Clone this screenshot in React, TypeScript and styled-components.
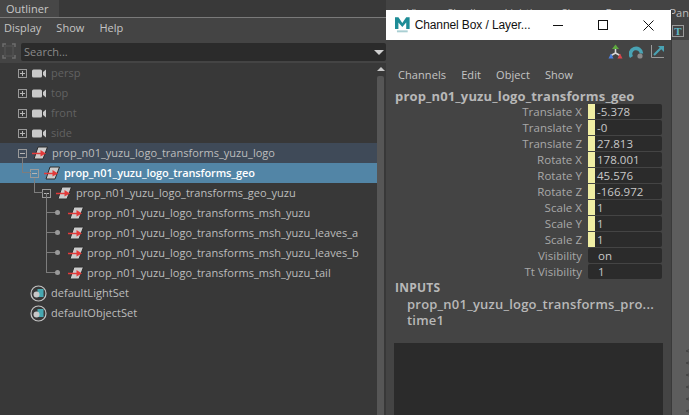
import * as React from "react";
import styled, { createGlobalStyle } from "styled-components";

const Global = createGlobalStyle`
  html, body {
    margin: 0;
    padding: 0;
    background: #444444;
    overflow: hidden;
  }
  * { box-sizing: border-box; }
`;

const Desktop = styled.div`
  position: relative;
  width: 689px;
  height: 415px;
  display: grid;
  grid-template-columns: 386px 1fr;
  overflow: hidden;
  font-family: "Open Sans", "Noto Sans", sans-serif;
  font-size: 11px;
  letter-spacing: 0.03px;
  color: #c4c4c4;
`;

/* outliner */
const Outliner = styled.div`
  display: flex;
  flex-direction: column;
  height: 415px;
  background: #383838;
`;

const TabStrip = styled.div`
  height: 18px;
  background: #393939;
  border-bottom: 1px solid #7a7a7a;
  display: flex;
`;

const Tab = styled.div`
  width: 59px;
  height: 17px;
  background: #474747;
  padding-left: 6px;
  line-height: 17px;
  color: #c8c8c8;
`;

const MenuBar = styled.div<{ $gap: number }>`
  display: flex;
  gap: ${(p) => p.$gap}px;
  align-items: center;
`;

const OutlinerMenu = styled(MenuBar)`
  height: 25px;
  padding: 0 0 7px 4px;
  background: #444444;
`;

const SearchRow = styled.div`
  height: 20px;
  background: #444444;
  display: flex;
  align-items: flex-start;
  padding-left: 2px;
  gap: 5px;
`;

const SearchField = styled.div`
  flex: 1;
  height: 18px;
  background: #2b2b2b;
  border-radius: 2px;
  color: #8a8a8a;
  padding-left: 3px;
  line-height: 18px;
  display: flex;
  justify-content: space-between;
  align-items: center;
  padding-right: 2px;
`;

const TreeArea = styled.div`
  flex: 1;
  display: grid;
  grid-template-columns: 377px 7px 2px;
`;

const Tree = styled.div`
  display: flex;
  flex-direction: column;
`;

const Row = styled.div<{ $level: number; $state?: "parent" | "selected"; $dim?: boolean }>`
  position: relative;
  height: 20px;
  display: flex;
  align-items: center;
  padding-left: ${(p) => 18 + p.$level * 12}px;
  background: ${(p) =>
    p.$state === "selected" ? "#5285a6" : p.$state === "parent" ? "#3f4a58" : "transparent"};
  color: ${(p) => (p.$state === "selected" ? "#ffffff" : p.$dim ? "#626262" : "#bdbdbd")};
  font-weight: ${(p) => (p.$state === "selected" ? 600 : 400)};
  letter-spacing: ${(p) => (p.$state === "selected" ? "-0.1px" : "inherit")};
`;

const RowLabel = styled.span<{ $tight?: boolean }>`
  white-space: nowrap;
  margin-left: ${(p) => (p.$tight ? 3 : 4)}px;
  padding-bottom: 2px;
`;

const Gutter = styled.span`
  width: 9px;
  height: 9px;
  margin-right: 5px;
  display: flex;
  flex: none;
`;

const Elbow = styled.span<{ $height: number; $left: number }>`
  position: absolute;
  left: ${(p) => p.$left}px;
  bottom: 10px;
  width: 9px;
  height: ${(p) => p.$height}px;
  border-left: 1px solid #7d7d7d;
  border-bottom: 1px solid #7d7d7d;
`;

const Dot = styled.span`
  width: 5px;
  height: 5px;
  border-radius: 50%;
  background: #9a9a9a;
  margin: 1px 0 0 1px;
`;

const Scrollbar = styled.div`
  display: flex;
  flex-direction: column;
  align-items: center;
`;

const ScrollThumb = styled.div`
  flex: 1;
  width: 7px;
  margin-top: 5px;
  background: #565656;
  border-radius: 2px 2px 0 0;
`;

const ArrowUp = styled.div`
  margin-top: 4px;
  width: 0;
  height: 0;
  border-left: 4px solid transparent;
  border-right: 4px solid transparent;
  border-bottom: 4px solid #c8c8c8;
`;

const ArrowDown = styled.div`
  width: 0;
  height: 0;
  border-left: 5px solid transparent;
  border-right: 5px solid transparent;
  border-top: 5px solid #d0d0d0;
`;

/* viewport behind the floating window */
const Viewport = styled.div`
  display: flex;
  flex-direction: column;
  background: #5d5d5d;
`;

const ViewportMenu = styled(MenuBar)`
  height: 24px;
  background: #444444;
  padding-left: 21px;
  white-space: nowrap;
  overflow: hidden;
  color: #bdbdbd;
`;

const ViewportTools = styled.div`
  height: 16px;
  background: #444444;
  display: flex;
  padding: 1px 0 0 286px;
`;

const TextTool = styled.div`
  width: 12px;
  height: 12px;
  border: 1px solid #9a9a9a;
  color: #5fb6c4;
  font-weight: 700;
  font-family: "Liberation Serif", serif;
  font-size: 11px;
  line-height: 10px;
  text-align: center;
`;

const ViewportCanvas = styled.div`
  flex: 1;
  display: flex;
  justify-content: flex-end;
  align-items: flex-end;
`;

/* floating channel box */
const ChannelWindow = styled.div`
  position: absolute;
  left: 386px;
  top: 10px;
  width: 286px;
  height: 405px;
  display: flex;
  flex-direction: column;
  background: #444444;
  border-right: 1px solid #3a3a3a;
`;

const TitleBar = styled.div`
  height: 30px;
  background: #ffffff;
  color: #111111;
  display: flex;
  align-items: center;
  font-family: "Liberation Sans", sans-serif;
  font-size: 12px;
  letter-spacing: -0.1px;
  padding-left: 9px;
`;

const TitleText = styled.span`
  margin-left: 5px;
  width: 125px;
  white-space: nowrap;
`;

const WindowButton = styled.div`
  width: 46px;
  height: 30px;
  display: flex;
  align-items: center;
  justify-content: center;
`;

const IconRow = styled.div`
  height: 22px;
  display: flex;
  align-items: center;
  justify-content: flex-end;
  gap: 6px;
  padding: 0 6px 0 0;
`;

const ChannelMenu = styled(MenuBar)`
  height: 22px;
  padding-left: 12px;
  margin-top: 1px;
  letter-spacing: 0.08px;
`;

const ObjectName = styled.div`
  font-weight: 700;
  font-size: 13px;
  letter-spacing: 0.15px;
  padding-left: 9px;
  height: 16px;
  line-height: 16px;
  margin-top: 3px;
  color: #b8b8b8;
`;

const Channels = styled.div`
  display: flex;
  flex-direction: column;
  margin-top: -1px;
`;

const ChannelRow = styled.div`
  display: grid;
  grid-template-columns: 202px 7px 67px;
  column-gap: 0;
  height: 16px;
  align-items: center;
`;

const ChannelLabel = styled.div`
  text-align: right;
  padding-right: 6px;
  font-size: 11.5px;
  color: #a8a8a8;
`;

const Keyed = styled.div`
  height: 15px;
  background: #f0eea4;
`;

const Value = styled.div<{ $wide?: boolean }>`
  grid-column: ${(p) => (p.$wide ? "2 / 4" : "3")};
  height: 15px;
  background: #2b2b2b;
  border-radius: ${(p) => (p.$wide ? "2px" : "0 2px 2px 0")};
  padding-left: ${(p) => (p.$wide ? "10px" : "2px")};
  line-height: 15px;
  font-size: 11.5px;
  color: #c8c8c8;
`;

const Inputs = styled.div`
  margin-top: 1px;
  padding-left: 9px;
  font-size: 13px;
  letter-spacing: 0.22px;
  display: flex;
  flex-direction: column;
  color: #b8b8b8;
`;

const InputsHead = styled.div`
  font-weight: 700;
  font-size: 12px;
  height: 16px;
  line-height: 16px;
`;

const InputItem = styled.div`
  font-weight: 600;
  height: 16px;
  line-height: 16px;
  padding-left: 12px;
  white-space: nowrap;
`;

const DarkPanel = styled.div`
  flex: 1;
  margin: 15px 8px 0 8px;
  background: #2b2b2b;
`;

const CameraIcon = () => (
  <svg width="15" height="9" viewBox="0 0 15 9">
    <rect x="0" y="0.5" width="10" height="8" rx="1.5" fill="#c9c9c9" />
    <path d="M14 0.5 V8.5 L11 6 V3 Z" fill="#c9c9c9" />
  </svg>
);

const TransformIcon = () => (
  <svg width="16" height="14" viewBox="0 0 16 14" style={{ flex: "none" }}>
    <path d="M6 1 H15.5 L11 13 H2 Z" fill="#cbcbcb" stroke="#2c2c2c" strokeWidth="1" />
    <path d="M0 7.5 H10" stroke="#e23a3a" strokeWidth="1.5" />
    <path d="M8.5 4 L14 7.5 L8.5 10.5 Z" fill="#e23a3a" />
  </svg>
);

const SetIcon = () => (
  <svg width="17" height="17" viewBox="0 0 17 17" style={{ flex: "none" }}>
    <circle cx="8.5" cy="8.5" r="7.5" fill="none" stroke="#c4c4c4" strokeWidth="1.2" />
    <rect x="7.5" y="4" width="6" height="8" fill="#47a7b0" />
    <circle cx="6.5" cy="9.5" r="3" fill="#c8c8c8" />
  </svg>
);

const Expander = ({ open }: { open: boolean }) => (
  <svg width="9" height="9" viewBox="0 0 9 9">
    <rect x="0.5" y="0.5" width="8" height="8" fill="none" stroke="#9a9a9a" />
    <path d="M2 4.5 H7" stroke="#b5b5b5" />
    {!open && <path d="M4.5 2 V7" stroke="#b5b5b5" />}
  </svg>
);

const FitIcon = () => (
  <svg width="14" height="16" viewBox="0 0 14 16">
    <path
      d="M1 4 V1 H4 M10 1 H13 V4 M13 12 V15 H10 M4 15 H1 V12"
      fill="none"
      stroke="#6c6c6c"
      strokeWidth="1.5"
    />
    <rect x="3" y="3" width="8" height="10" fill="none" stroke="#565656" />
  </svg>
);

const MayaLogo = () => (
  <svg width="15" height="18" viewBox="0 0 15 18">
    <path d="M0 13 V1 H3.5 L7.5 7 L11.5 1 H15 V13 H11.5 V6.5 L7.5 11 L3.5 6.5 V13 Z" fill="#1e8c96" />
    <rect x="2" y="14.5" width="11" height="2" fill="#a9cfd3" />
  </svg>
);

const AxisIcon = () => (
  <svg width="15" height="15" viewBox="0 0 15 15">
    <path d="M7.5 5 V9 M7.5 9 L3 11.5 M7.5 9 L12 11.5" stroke="#d8d8d8" strokeWidth="1.5" />
    <path d="M7.5 0.5 L11 5 H4 Z" fill="#5ea83f" />
    <path d="M0.5 14.5 L3 9.5 L5.5 14.5 Z" fill="#4a7fe0" />
    <path d="M9.5 14.5 L12 9.5 L14.5 14.5 Z" fill="#d9444a" />
  </svg>
);

const SnapIcon = () => (
  <svg width="15" height="15" viewBox="0 0 15 15">
    <path d="M2.5 13 A5.5 5.5 0 1 1 12.5 9.5" fill="none" stroke="#49a3b4" strokeWidth="3.6" />
    <circle cx="11" cy="12" r="2.6" fill="#8a8a8a" />
  </svg>
);

const ScaleIcon = () => (
  <svg width="15" height="15" viewBox="0 0 15 15">
    <path d="M1.5 1 V13.5 H14" fill="none" stroke="#9a9a9a" />
    <path d="M4 11 L11 4" stroke="#49a3b4" strokeWidth="2.2" />
    <path d="M8 2 H14 V8 Z" fill="#49a3b4" />
  </svg>
);

const Minimize = () => (
  <svg width="11" height="11" viewBox="0 0 11 11">
    <path d="M0 5.5 H10" stroke="#111" />
  </svg>
);

const Maximize = () => (
  <svg width="11" height="11" viewBox="0 0 11 11">
    <rect x="0.5" y="0.5" width="9" height="9" fill="none" stroke="#111" />
  </svg>
);

const CloseIcon = () => (
  <svg width="11" height="11" viewBox="0 0 11 11">
    <path d="M0.5 0.5 L10.5 10.5 M10.5 0.5 L0.5 10.5" stroke="#111" />
  </svg>
);

const Mesh = () => (
  <svg width="17" height="72" viewBox="0 0 17 72">
    <path
      d="M0 8 L17 0 M0 8 L17 14 M0 20 L17 14 M0 20 L17 26 M0 32 L17 26 M0 32 L17 38 M0 44 L17 38 M0 44 L17 50 M0 56 L17 50 M0 56 L17 62 M0 68 L17 62 M0 68 L10 72"
      fill="none"
      stroke="#3f3f3f"
      strokeWidth="0.8"
    />
  </svg>
);

const cameras = ["persp", "top", "front", "side"];

const meshes = [
  "prop_n01_yuzu_logo_transforms_msh_yuzu",
  "prop_n01_yuzu_logo_transforms_msh_yuzu_leaves_a",
  "prop_n01_yuzu_logo_transforms_msh_yuzu_leaves_b",
  "prop_n01_yuzu_logo_transforms_msh_yuzu_tail",
];

const channels = [
  { name: "Translate X", value: "-5.378" },
  { name: "Translate Y", value: "-0" },
  { name: "Translate Z", value: "27.813" },
  { name: "Rotate X", value: "178.001" },
  { name: "Rotate Y", value: "45.576" },
  { name: "Rotate Z", value: "-166.972" },
  { name: "Scale X", value: "1" },
  { name: "Scale Y", value: "1" },
  { name: "Scale Z", value: "1" },
];

const App: React.FC = () => {
  return (
    <Desktop>
      <Global />
      <Outliner>
        <TabStrip>
          <Tab>Outliner</Tab>
        </TabStrip>
        <OutlinerMenu $gap={15}>
          <span>Display</span>
          <span>Show</span>
          <span>Help</span>
        </OutlinerMenu>
        <SearchRow>
          <FitIcon />
          <SearchField>
            Search...
            <ArrowDown />
          </SearchField>
        </SearchRow>
        <TreeArea>
          <Tree>
            {cameras.map((c) => (
              <Row $level={0} $dim key={c}>
                <Gutter>
                  <Expander open={false} />
                </Gutter>
                <CameraIcon />
                <RowLabel>{c}</RowLabel>
              </Row>
            ))}
            <Row $level={0} $state="parent">
              <Gutter>
                <Expander open />
              </Gutter>
              <TransformIcon />
              <RowLabel>prop_n01_yuzu_logo_transforms_yuzu_logo</RowLabel>
            </Row>
            <Row $level={1} $state="selected">
              <Elbow $left={22} $height={15} />
              <Gutter>
                <Expander open />
              </Gutter>
              <TransformIcon />
              <RowLabel>prop_n01_yuzu_logo_transforms_geo</RowLabel>
            </Row>
            <Row $level={2}>
              <Elbow $left={34} $height={15} />
              <Gutter>
                <Expander open />
              </Gutter>
              <TransformIcon />
              <RowLabel>prop_n01_yuzu_logo_transforms_geo_yuzu</RowLabel>
            </Row>
            {meshes.map((m) => (
              <Row $level={3} key={m}>
                <Elbow $left={46} $height={20} />
                <Gutter>
                  <Dot />
                </Gutter>
                <TransformIcon />
                <RowLabel $tight>{m}</RowLabel>
              </Row>
            ))}
            <Row $level={1}>
              <SetIcon />
              <RowLabel>defaultLightSet</RowLabel>
            </Row>
            <Row $level={1}>
              <SetIcon />
              <RowLabel>defaultObjectSet</RowLabel>
            </Row>
          </Tree>
          <Scrollbar>
            <ArrowUp />
            <ScrollThumb />
          </Scrollbar>
        </TreeArea>
      </Outliner>

      <Viewport>
        <ViewportMenu $gap={16}>
          <span>View</span>
          <span>Shading</span>
          <span>Lighting</span>
          <span>Show</span>
          <span>Renderer</span>
          <span>Panels</span>
        </ViewportMenu>
        <ViewportTools>
          <TextTool>T</TextTool>
        </ViewportTools>
        <ViewportCanvas>
          <Mesh />
        </ViewportCanvas>
      </Viewport>

      <ChannelWindow>
        <TitleBar>
          <MayaLogo />
          <TitleText>Channel Box / Layer...</TitleText>
          <WindowButton>
            <Minimize />
          </WindowButton>
          <WindowButton>
            <Maximize />
          </WindowButton>
          <WindowButton>
            <CloseIcon />
          </WindowButton>
        </TitleBar>
        <IconRow>
          <AxisIcon />
          <SnapIcon />
          <ScaleIcon />
        </IconRow>
        <ChannelMenu $gap={15}>
          <span>Channels</span>
          <span>Edit</span>
          <span>Object</span>
          <span>Show</span>
        </ChannelMenu>
        <ObjectName>prop_n01_yuzu_logo_transforms_geo</ObjectName>
        <Channels>
          {channels.map((c) => (
            <ChannelRow key={c.name}>
              <ChannelLabel>{c.name}</ChannelLabel>
              <Keyed />
              <Value>{c.value}</Value>
            </ChannelRow>
          ))}
          <ChannelRow>
            <ChannelLabel>Visibility</ChannelLabel>
            <Value $wide>on</Value>
          </ChannelRow>
          <ChannelRow>
            <ChannelLabel>Tt Visibility</ChannelLabel>
            <Value $wide>1</Value>
          </ChannelRow>
        </Channels>
        <Inputs>
          <InputsHead>INPUTS</InputsHead>
          <InputItem>prop_n01_yuzu_logo_transforms_pro...</InputItem>
          <InputItem>time1</InputItem>
        </Inputs>
        <DarkPanel />
      </ChannelWindow>
    </Desktop>
  );
};

export default App;
